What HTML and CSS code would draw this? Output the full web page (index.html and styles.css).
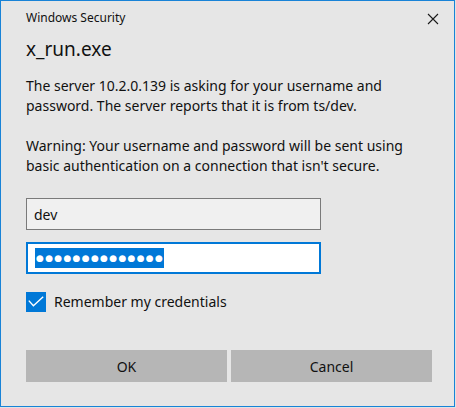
FILE: index.html
```html
<!DOCTYPE html>
<html>
<head>
<meta charset="utf-8">
<link rel="stylesheet" href="styles.css">
</head>
<body>
<div class="window">
  <div class="titlebar">
    <span class="title">Windows Security</span>
    <svg class="close" width="12" height="12" viewBox="0 0 12 12"><path d="M1 1 L11 11 M11 1 L1 11" stroke="#1a1a1a" stroke-width="1.1" fill="none"/></svg>
  </div>
  <h1 class="app">x_run.exe</h1>
  <p class="msg">The server 10.2.0.139 is asking for your username and<br>password. The server reports that it is from ts/dev.</p>
  <p class="msg warn">Warning: Your username and password will be sent using<br>basic authentication on a connection that isn't secure.</p>
  <div class="field user">dev</div>
  <div class="field pass"><span class="sel">●●●●●●●●●●●●●●</span></div>
  <div class="remember">
    <span class="check"><svg width="20" height="20" viewBox="0 0 20 20"><polyline points="2.8,8.6 7.4,13.8 17.2,4.8" fill="none" stroke="#fff" stroke-width="1.4"/></svg></span>
    <span class="label">Remember my credentials</span>
  </div>
  <div class="buttons">
    <div class="btn">OK</div>
    <div class="btn">Cancel</div>
  </div>
</div>
</body>
</html>
```
FILE: styles.css
```css
html, body {
  margin: 0;
  padding: 0;
  background: #e2e2e2;
}
body {
  width: 456px;
  height: 408px;
  font-family: "Noto Sans", "Open Sans", sans-serif;
  color: #111;
}
.window {
  width: 453px;
  height: 405px;
  border: 1px solid #1883d7;
  background: #e6e6e6;
  box-sizing: content-box;
  padding: 0;
  position: relative;
}
.titlebar {
  display: flex;
  align-items: center;
  justify-content: space-between;
  padding: 9px 15px 0 25px;
  height: 16px;
}
.title {
  font-size: 12px;
  line-height: 16px;
}
.close {
  display: block;
  margin-top: 1px;
}
.app {
  margin: 10px 0 0 25px;
  font-size: 19px;
  font-weight: normal;
  line-height: 26px;
  height: 26px;
}
.msg {
  margin: 14px 0 0 25px;
  font-size: 14px;
  line-height: 20px;
  white-space: nowrap;
}
.warn {
  margin-top: 20px;
}
.field {
  margin-left: 25px;
  width: 295px;
  height: 32px;
  box-sizing: border-box;
  font-size: 14px;
  display: flex;
  align-items: center;
}
.user {
  margin-top: 22px;
  background: #f0f0f0;
  border: 1px solid #7a7a7a;
  padding-left: 7px;
}
.pass {
  margin-top: 12px;
  background: #fff;
  border: 2px solid #0078d7;
  padding-left: 7px;
}
.sel {
  background: #0078d7;
  color: #fff;
  height: 20px;
  display: inline-flex;
  align-items: center;
  font-family: "DejaVu Sans", sans-serif;
  font-size: 9px;
  letter-spacing: 1.3px;
  padding: 0 0 0 1px;
  box-sizing: border-box;
  white-space: nowrap;
}
.remember {
  margin: 18px 0 0 25px;
  display: flex;
  align-items: center;
  gap: 8px;
}
.check {
  width: 20px;
  height: 20px;
  background: #0078d7;
  display: block;
}
.check svg {
  display: block;
}
.label {
  font-size: 14px;
  line-height: 20px;
}
.buttons {
  margin: 38px 0 0 25px;
  display: flex;
  gap: 4px;
}
.btn {
  width: 201px;
  height: 32px;
  background: #b6b6b6;
  display: flex;
  align-items: center;
  justify-content: center;
  font-size: 14px;
}
```
